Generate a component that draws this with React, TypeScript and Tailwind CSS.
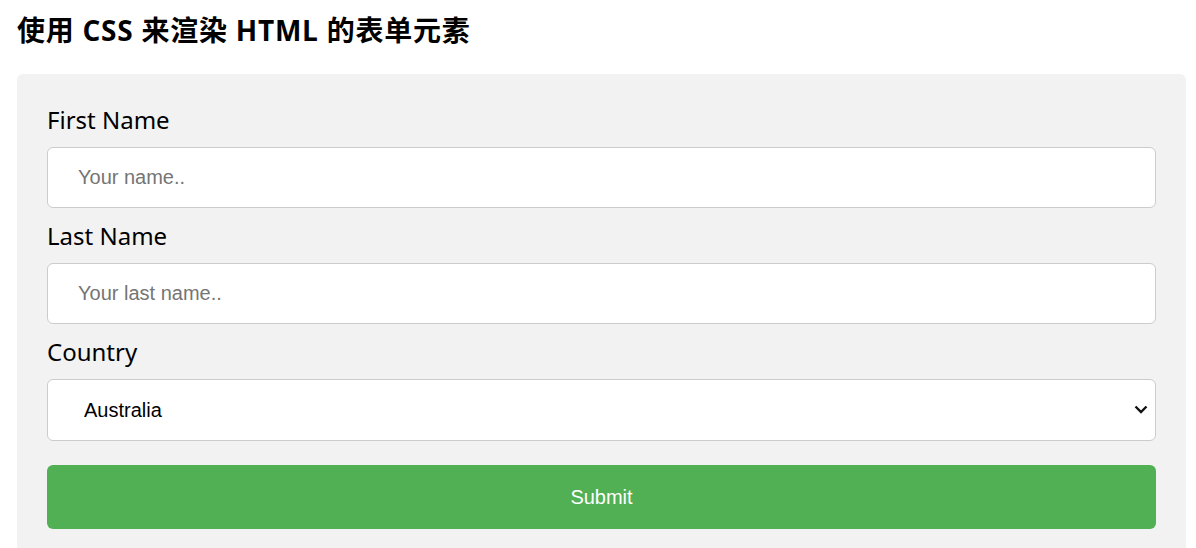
import { useState } from "react";

const countries = ["Australia", "Canada", "USA"];

export default function App() {
  const [first, setFirst] = useState("");
  const [last, setLast] = useState("");
  const [country, setCountry] = useState("australia");

  return (
    <div className="min-h-screen bg-white pl-[17px] pr-[10px] pt-[10px]" style={{ fontFamily: "'Noto Sans', 'Noto Sans CJK SC', sans-serif" }}>
      <h3 className="m-0 text-[28px] font-bold leading-[40px] tracking-[0.75px] text-black" style={{ fontFamily: "'Open Sans', 'Noto Sans CJK SC', sans-serif" }}>
        使用 CSS 来渲染 HTML 的表单元素
      </h3>

      <div className="mt-[24px] rounded-[6px] bg-[#f2f2f2] px-[30px] pt-[30px] pb-[42px]">
        <form onSubmit={(e) => e.preventDefault()}>
          <label htmlFor="fname" className="block text-[24px] leading-[31px] text-black">First Name</label>
          <input
            id="fname"
            value={first}
            onChange={(e) => setFirst(e.target.value)}
            placeholder="Your name.."
            className="my-[12px] box-border block h-[61px] w-full rounded-[6px] border border-[#ccc] bg-white px-[30px] text-[20px] text-black outline-none placeholder:text-[#757575]"
            style={{ fontFamily: "'Liberation Sans', Arial, sans-serif" }}
          />

          <label htmlFor="lname" className="block text-[24px] leading-[31px] text-black">Last Name</label>
          <input
            id="lname"
            value={last}
            onChange={(e) => setLast(e.target.value)}
            placeholder="Your last name.."
            className="my-[12px] box-border block h-[61px] w-full rounded-[6px] border border-[#ccc] bg-white px-[30px] text-[20px] text-black outline-none placeholder:text-[#757575]"
            style={{ fontFamily: "'Liberation Sans', Arial, sans-serif" }}
          />

          <label htmlFor="country" className="block text-[24px] leading-[31px] text-black">Country</label>
          <div className="relative my-[12px]">
            <select
              id="country"
              value={country}
              onChange={(e) => setCountry(e.target.value)}
              className="box-border block h-[62px] w-full appearance-none rounded-[6px] border border-[#ccc] bg-white pl-[36px] pr-[40px] text-[20px] text-black outline-none"
              style={{ fontFamily: "'Liberation Sans', Arial, sans-serif" }}
            >
              {countries.map((c) => (
                <option key={c} value={c.toLowerCase()}>{c}</option>
              ))}
            </select>
            {/* dropdown chevron */}
            <svg className="pointer-events-none absolute right-[8px] top-[26px]" width="14" height="9" viewBox="0 0 14 9">
              <path d="M1.5 1.5 L7 7 L12.5 1.5" fill="none" stroke="#111" strokeWidth="2.4" />
            </svg>
          </div>

          <button
            type="submit"
            className="mt-[24px] block h-[64px] w-full cursor-pointer rounded-[6px] border-0 bg-[#51af54] text-[20px] text-white"
            style={{ fontFamily: "'Liberation Sans', Arial, sans-serif" }}
          >
            Submit
          </button>
        </form>
      </div>
    </div>
  );
}
